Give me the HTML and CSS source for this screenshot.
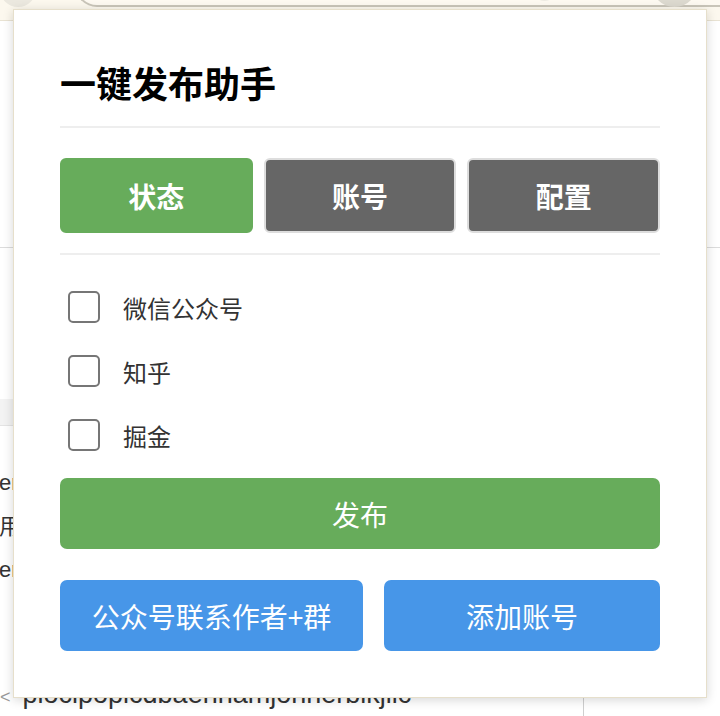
FILE: index.html
```html
<!DOCTYPE html>
<html lang="zh-CN">
<head>
<meta charset="utf-8">
<title>一键发布助手</title>
<link rel="stylesheet" href="styles.css">
</head>
<body>
<div class="page">
  <div class="toolbar">
    <div class="tb-circle"></div>
    <div class="addr">
      <div class="addr-dot"></div>
      <div class="addr-circle"></div>
    </div>
  </div>
  <div class="upper"></div>
  <div class="gap"></div>
  <div class="panel">
    <div class="panel-head"></div>
    <div class="panel-body">
      <p class="bg-line l1">er</p>
      <p class="bg-line l2">用</p>
      <p class="bg-line l3">er</p>
      <p class="bg-id"><span class="lt">&lt;</span>plocipopicdbaehnamjonnerbikjlic</p>
    </div>
  </div>
</div>

<div class="popup">
  <h1 class="title">一键发布助手</h1>
  <div class="divider"></div>
  <div class="tabs">
    <button class="tab active">状态</button>
    <button class="tab">账号</button>
    <button class="tab">配置</button>
  </div>
  <div class="divider d2"></div>
  <ul class="platforms">
    <li class="platform"><span class="box"></span><span class="label">微信公众号</span></li>
    <li class="platform"><span class="box"></span><span class="label">知乎</span></li>
    <li class="platform"><span class="box"></span><span class="label">掘金</span></li>
  </ul>
  <button class="btn publish">发布</button>
  <div class="actions">
    <button class="btn blue">公众号联系作者+群</button>
    <button class="btn blue">添加账号</button>
  </div>
</div>
</body>
</html>
```

FILE: styles.css
```css
* { box-sizing: border-box; }
html, body {
  margin: 0;
  padding: 0;
  width: 720px;
  height: 716px;
  overflow: hidden;
  background: #ffffff;
  font-family: "Liberation Sans", "Noto Sans CJK SC", sans-serif;
}

/* background browser page */
.page { width: 720px; height: 716px; }
.toolbar {
  height: 21px;
  background: #fcf8ee;
  border-bottom: 1px solid #e9e3d3;
  display: flex;
  align-items: flex-end;
  overflow: hidden;
}
.tb-circle {
  width: 36px;
  height: 36px;
  margin-bottom: 13px;
  border-radius: 50%;
  background: #ebe8df;
  flex: none;
}
.addr {
  flex: 1;
  height: 40px;
  margin-left: 39px;
  margin-right: -30px;
  margin-bottom: 13px;
  background: #fdf9f1;
  border-bottom: 2px solid #c9c5b9;
  border-left: 2px solid #c9c5b9;
  border-radius: 0 0 0 22px;
  display: flex;
  align-items: flex-end;
}
.addr-dot {
  width: 25px;
  height: 25px;
  margin-left: 455px;
  margin-bottom: 4px;
  border-radius: 50%;
  background: #eeebe3;
}
.addr-circle {
  width: 47px;
  height: 47px;
  margin-left: 94px;
  margin-bottom: -2px;
  border-radius: 50%;
  background: #dcd9cf;
}
.upper {
  height: 227px;
  border-bottom: 1px solid #dcdcdc;
}
.gap { height: 151px; }
.panel {
  width: 584px;
  height: 320px;
  border-right: 1px solid #cfcfcf;
}
.panel-head {
  height: 27px;
  background: #f3f3f3;
  border-bottom: 1px solid #e4e4e4;
}
.panel-body { padding-top: 35px; }
.bg-line {
  margin: 0;
  font-size: 22px;
  line-height: 44px;
  color: #333;
  text-indent: -1px;
}
.bg-line.l3 { line-height: 42px; }
.bg-id {
  margin: 88px 0 0 0;
  font-size: 27px;
  line-height: 30px;
  color: #333;
  white-space: nowrap;
}
.bg-id .lt { color: #999; margin-right: 12px; font-size: 18px; }

/* popup */
.popup {
  position: absolute;
  left: 13px;
  top: 9px;
  width: 694px;
  height: 689px;
  background: #ffffff;
  border: 1px solid #e6dfcb;
  box-shadow: 0 2px 10px rgba(0, 0, 0, 0.16);
  padding: 51px 46px 0 46px;
  font-family: "Noto Sans CJK SC", "Liberation Sans", sans-serif;
}
.title {
  margin: 0;
  font-size: 36px;
  line-height: 43px;
  font-weight: 700;
  color: #000;
}
.divider {
  height: 2px;
  background: #eeeeee;
  margin-top: 22px;
}
.tabs {
  margin-top: 30px;
  display: grid;
  grid-template-columns: 1fr 1fr 1fr;
  gap: 11px;
}
.tab {
  height: 75px;
  border: 2px solid #dddddd;
  border-radius: 6px;
  background: #666666;
  color: #ffffff;
  font-family: inherit;
  font-size: 28px;
  font-weight: 700;
  padding: 0;
}
.tab.active {
  background: #67ac5b;
  border-color: #67ac5b;
}
.divider.d2 { margin-top: 20px; }
.platforms {
  list-style: none;
  margin: 20px 0 0 0;
  padding: 0;
}
.platform {
  height: 64px;
  display: flex;
  align-items: center;
  padding-left: 8px;
}
.box {
  width: 32px;
  height: 32px;
  border: 2px solid #767676;
  border-radius: 5px;
  flex: none;
}
.label {
  margin-left: 23px;
  font-size: 24px;
  color: #333333;
}
.btn {
  height: 71px;
  border: none;
  border-radius: 7px;
  color: #ffffff;
  font-family: inherit;
  font-size: 28px;
  font-weight: 400;
  padding: 0;
}
.publish {
  display: block;
  width: 100%;
  margin-top: 11px;
  background: #67ac5b;
}
.actions {
  margin-top: 31px;
  display: grid;
  grid-template-columns: 303px 276px;
  gap: 21px;
}
.blue { background: #4796e8; }
```
